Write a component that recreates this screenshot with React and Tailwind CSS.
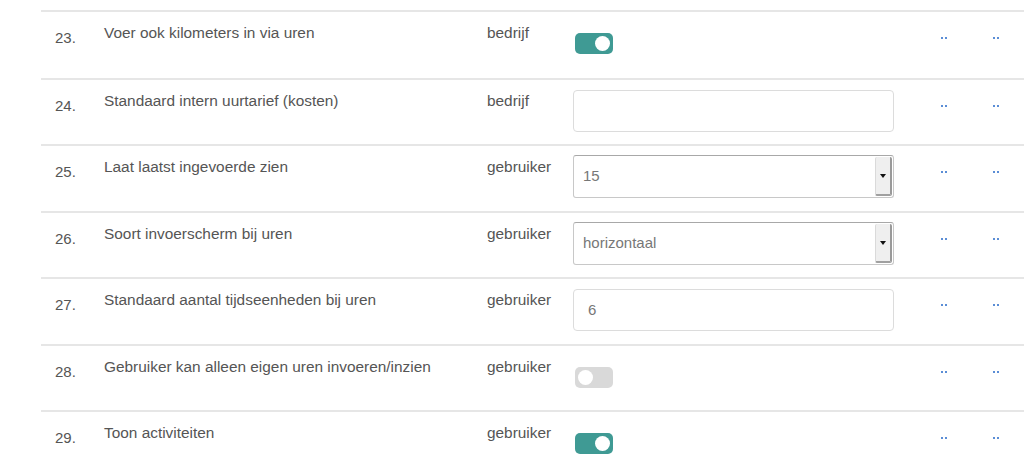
const rows = [
  { n: 23, label: 'Voer ook kilometers in via uren', scope: 'bedrijf', type: 'toggle', on: true, h: 'h-[68px]' },
  { n: 24, label: 'Standaard intern uurtarief (kosten)', scope: 'bedrijf', type: 'input', value: '', h: 'h-[66px]' },
  { n: 25, label: 'Laat laatst ingevoerde zien', scope: 'gebruiker', type: 'select', value: '15', h: 'h-[67px]' },
  { n: 26, label: 'Soort invoerscherm bij uren', scope: 'gebruiker', type: 'select', value: 'horizontaal', h: 'h-[66px]' },
  { n: 27, label: 'Standaard aantal tijdseenheden bij uren', scope: 'gebruiker', type: 'input', value: '6', h: 'h-[67px]' },
  { n: 28, label: 'Gebruiker kan alleen eigen uren invoeren/inzien', scope: 'gebruiker', type: 'toggle', on: false, h: 'h-[66px]' },
  { n: 29, label: 'Toon activiteiten', scope: 'gebruiker', type: 'toggle', on: true, h: 'h-[66px]' },
]

function Toggle({ on }) {
  return (
    <div className="pt-[21px]">
      <div
        className={
          'ml-[2px] w-[38px] h-[21px] rounded-[5px] flex items-center px-[3px] ' +
          (on ? 'bg-[#3f9a94] justify-end' : 'bg-[#d9d9d9] justify-start')
        }
      >
        <span className="w-[15px] h-[15px] rounded-full bg-white" />
      </div>
    </div>
  )
}

function TextInput({ value }) {
  return (
    <div className="pt-[10px]">
      <div className="w-[321px] h-[42px] rounded-[4px] border border-[#dcdcdc] bg-white flex items-center pl-[14px] text-[15px] text-[#777]">
        {value}
      </div>
    </div>
  )
}

function Select({ value }) {
  return (
    <div className="pt-[9px]">
      <div className="w-[321px] h-[43px] rounded-[3px] border border-[#c8c8c8] border-t-[#a8a8a8] bg-white flex items-stretch text-[15px] text-[#777]">
        <div className="flex-1 flex items-center pl-[9px]">{value}</div>
        <div className="w-[17px] my-[1px] mr-[1px] bg-[#efefef] border-l border-[#dadada] border-r-2 border-r-[#9a9a9a] border-b-2 border-b-[#a0a0a0] rounded-[2px] flex items-center justify-center">
          <span className="w-0 h-0 border-l-[3px] border-r-[3px] border-t-[4px] border-l-transparent border-r-transparent border-t-[#111]" />
        </div>
      </div>
    </div>
  )
}

function Dots() {
  return (
    <div className="pt-[25px] flex gap-[2px]">
      <span className="w-[2px] h-[2px] bg-[#5b8ed6]" />
      <span className="w-[2px] h-[2px] bg-[#5b8ed6]" />
    </div>
  )
}

export default function App() {
  return (
    <div className="w-[1024px] h-[474px] overflow-hidden bg-white" style={{ fontFamily: '"Liberation Sans", Arial, sans-serif' }}>
      <div className="ml-[41px] mt-[10px] w-[1000px]">
        {rows.map(r => (
          <div key={r.n} className={'flex border-t-2 border-[#e6e6e6] ' + r.h}>
            <div className="w-[63px] pl-[14px] pt-[16px] text-[15px] leading-5 text-[#555]">{r.n}.</div>
            <div className="w-[383px] pt-[11px] text-[15.4px] leading-5 text-[#555]">{r.label}</div>
            <div className="w-[86px] pt-[11px] text-[15.4px] leading-5 text-[#555]">{r.scope}</div>
            <div className="w-[321px]">
              {r.type === 'toggle' && <Toggle on={r.on} />}
              {r.type === 'input' && <TextInput value={r.value} />}
              {r.type === 'select' && <Select value={r.value} />}
            </div>
            <div className="w-[47px]" />
            <div className="w-[52px]"><Dots /></div>
            <div><Dots /></div>
          </div>
        ))}
      </div>
    </div>
  )
}
